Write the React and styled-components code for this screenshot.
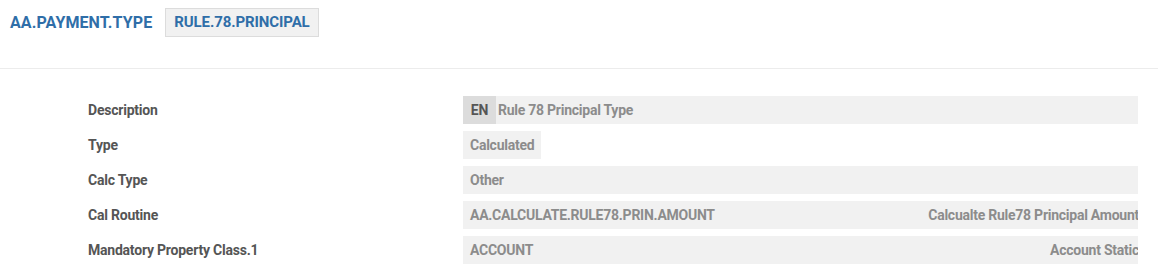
import React from "react";
import styled, { createGlobalStyle } from "styled-components";

const Global = createGlobalStyle`
  html, body { margin: 0; padding: 0; background: #fff; }
  body { font-family: Roboto, "Liberation Sans", sans-serif; }
`;

const Page = styled.div`
  width: 1158px;
`;

const Header = styled.div`
  display: flex;
  align-items: flex-start;
  gap: 13px;
  padding: 8px 10px 0 10px;
  height: 69px;
  box-sizing: border-box;
  border-bottom: 1px solid #ececec;
`;

const Title = styled.div`
  font-size: 16px;
  font-weight: 700;
  color: #2f6ea8;
  line-height: 29px;
  letter-spacing: 0.1px;
`;

const Badge = styled.div`
  font-size: 15px;
  font-weight: 700;
  color: #2f6ea8;
  background: #f1f1f1;
  border: 1px solid #dcdcdc;
  height: 29px;
  box-sizing: border-box;
  padding: 0 8px;
  line-height: 27px;
  letter-spacing: -0.1px;
`;

const Body = styled.div`
  display: flex;
  flex-direction: column;
  gap: 7px;
  padding: 27px 20px 0 88px;
`;

const Row = styled.div`
  display: grid;
  grid-template-columns: 375px 1fr;
  align-items: center;
  height: 28px;
`;

const Label = styled.div`
  font-size: 14px;
  font-weight: 700;
  color: #555;
  letter-spacing: -0.22px;
`;

const ValueBox = styled.div`
  display: flex;
  align-items: center;
  justify-content: space-between;
  height: 28px;
  background: #f1f1f1;
  font-size: 14px;
  font-weight: 700;
  color: #8c8c8c;
  letter-spacing: -0.25px;
  width: ${(p) => (p.$auto ? "max-content" : "auto")};
  padding-left: ${(p) => (p.$chip ? "0" : "7px")};
  overflow: hidden;
  white-space: nowrap;
`;

const Chip = styled.span`
  display: inline-flex;
  align-items: center;
  justify-content: center;
  height: 28px;
  width: 33px;
  background: #dcdcdc;
  color: #555;
  margin-right: 2px;
`;

const Left = styled.span`
  display: flex;
  align-items: center;
  padding-right: ${(p) => (p.$pad ? "7px" : "0")};
`;

const Right = styled.span`
  margin-right: -1px;
`;

const rows = [
  { label: "Description", value: "Rule 78 Principal Type", chip: "EN" },
  { label: "Type", value: "Calculated", auto: true },
  { label: "Calc Type", value: "Other" },
  { label: "Cal Routine", value: "AA.CALCULATE.RULE78.PRIN.AMOUNT", right: "Calcualte Rule78 Principal Amount" },
  { label: "Mandatory Property Class.1", value: "ACCOUNT", right: "Account Static" },
];

export default function App() {
  return (
    <Page>
      <Global />
      <Header>
        <Title>AA.PAYMENT.TYPE</Title>
        <Badge>RULE.78.PRINCIPAL</Badge>
      </Header>
      <Body>
        {rows.map((r) => (
          <Row key={r.label}>
            <Label>{r.label}</Label>
            <div>
              <ValueBox $auto={r.auto} $chip={!!r.chip}>
                <Left $pad={r.auto}>
                  {r.chip && <Chip>{r.chip}</Chip>}
                  {r.value}
                </Left>
                {r.right && <Right>{r.right}</Right>}
              </ValueBox>
            </div>
          </Row>
        ))}
      </Body>
    </Page>
  );
}
